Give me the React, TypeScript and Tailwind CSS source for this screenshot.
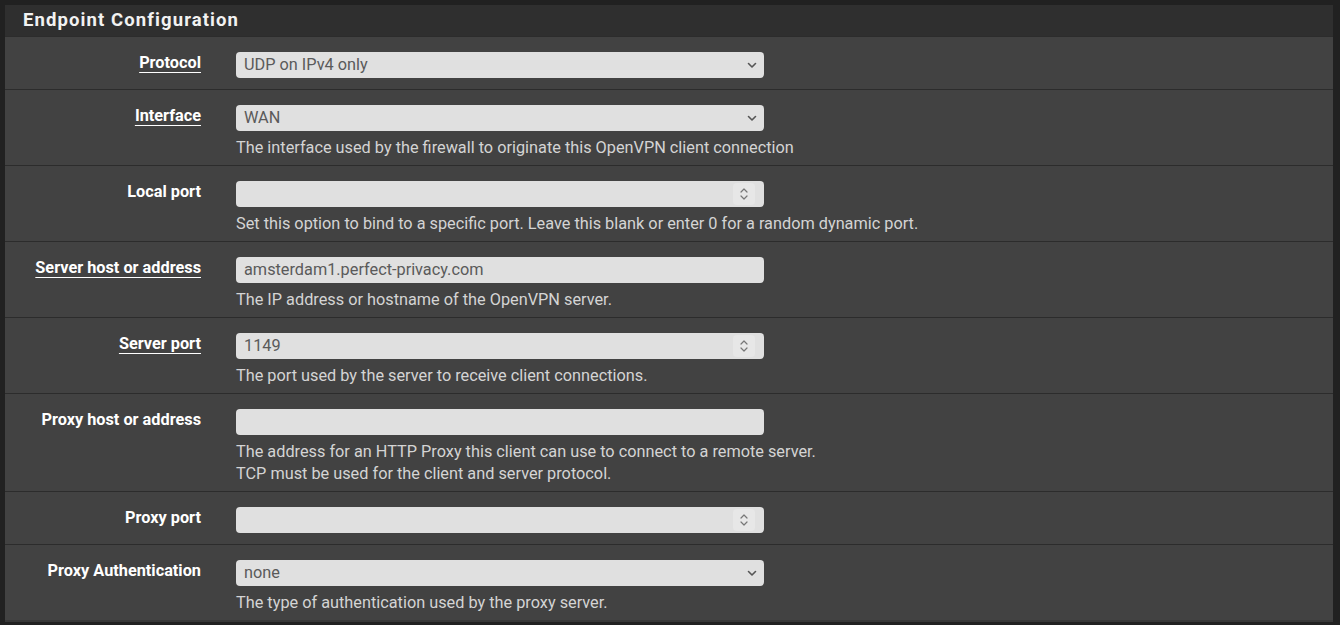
import React from "react";

type Row = {
  label: string;
  underline?: boolean;
  kind: "select" | "text" | "number";
  value?: string;
  help?: string[];
};

const rows: Row[] = [
  { label: "Protocol", underline: true, kind: "select", value: "UDP on IPv4 only" },
  {
    label: "Interface",
    underline: true,
    kind: "select",
    value: "WAN",
    help: ["The interface used by the firewall to originate this OpenVPN client connection"],
  },
  {
    label: "Local port",
    kind: "number",
    value: "",
    help: ["Set this option to bind to a specific port. Leave this blank or enter 0 for a random dynamic port."],
  },
  {
    label: "Server host or address",
    underline: true,
    kind: "text",
    value: "amsterdam1.perfect-privacy.com",
    help: ["The IP address or hostname of the OpenVPN server."],
  },
  {
    label: "Server port",
    underline: true,
    kind: "number",
    value: "1149",
    help: ["The port used by the server to receive client connections."],
  },
  {
    label: "Proxy host or address",
    kind: "text",
    value: "",
    help: [
      "The address for an HTTP Proxy this client can use to connect to a remote server.",
      "TCP must be used for the client and server protocol.",
    ],
  },
  { label: "Proxy port", kind: "number", value: "" },
  {
    label: "Proxy Authentication",
    kind: "select",
    value: "none",
    help: ["The type of authentication used by the proxy server."],
  },
];

function Chevron() {
  return (
    <svg width="10" height="7" viewBox="0 0 10 7" fill="none">
      <path d="M1.5 1.5 L5 5 L8.5 1.5" stroke="#555" strokeWidth="1.6" strokeLinecap="round" strokeLinejoin="round" />
    </svg>
  );
}

function Spinner() {
  return (
    <div className="flex h-[22px] w-[22px] items-center justify-center rounded-sm bg-[#e7e7e7]">
      <svg width="10" height="16" viewBox="0 0 10 16" fill="none">
        <path d="M2 6 L5 3 L8 6" stroke="#777" strokeWidth="1.2" strokeLinecap="round" strokeLinejoin="round" />
        <path d="M2 10 L5 13 L8 10" stroke="#777" strokeWidth="1.2" strokeLinecap="round" strokeLinejoin="round" />
      </svg>
    </div>
  );
}

function Control({ row }: { row: Row }) {
  return (
    <div className="flex h-[26px] w-[528px] items-center rounded-[4px] bg-[#e0e0e0] pl-[8px] pr-[8px] text-[16.3px] text-[#5a5a5a]">
      <span className="flex-1 whitespace-nowrap leading-[22px]">{row.value}</span>
      {row.kind === "select" && (
        <span className="mr-[-1px] flex items-center">
          <Chevron />
        </span>
      )}
      {row.kind === "number" && (
        <span className="mr-[1px] flex items-center">
          <Spinner />
        </span>
      )}
    </div>
  );
}

export default function App() {
  return (
    <div
      className="min-h-[625px] w-[1340px] bg-[#212121] pl-[5px] pt-[5px]"
      style={{ fontFamily: "Roboto, 'Liberation Sans', sans-serif" }}
    >
      <div className="w-[1328px] bg-[#424242]">
        <div className="flex h-[31px] items-center bg-[#2f2f2f] pl-[18px] text-[18.5px] font-bold tracking-[1.1px] text-[#f2f2f2]">
          Endpoint Configuration
        </div>
        {rows.map((row, i) => (
          <div
            key={i}
            className={`flex border-t border-[#2c2c2c] pt-[15px] ${row.help ? "pb-[6px]" : "pb-[11px]"}`}
          >
            <div className="w-[196px] shrink-0 pt-[1px] text-right">
              <span
                className={`block text-[16.3px] font-bold leading-[20px] text-white ${
                  row.underline ? "underline decoration-1 underline-offset-[4px]" : ""
                }`}
              >
                {row.label}
              </span>
            </div>
            <div className="ml-[35px]">
              <Control row={row} />
              {row.help && (
                <div className="mt-[6px] text-[16.3px] leading-[22px] text-[#d4d4d4]">
                  {row.help.map((h, j) => (
                    <div key={j}>{h}</div>
                  ))}
                </div>
              )}
            </div>
          </div>
        ))}
        <div className="h-[2px] bg-[#383838]" />
      </div>
    </div>
  );
}
